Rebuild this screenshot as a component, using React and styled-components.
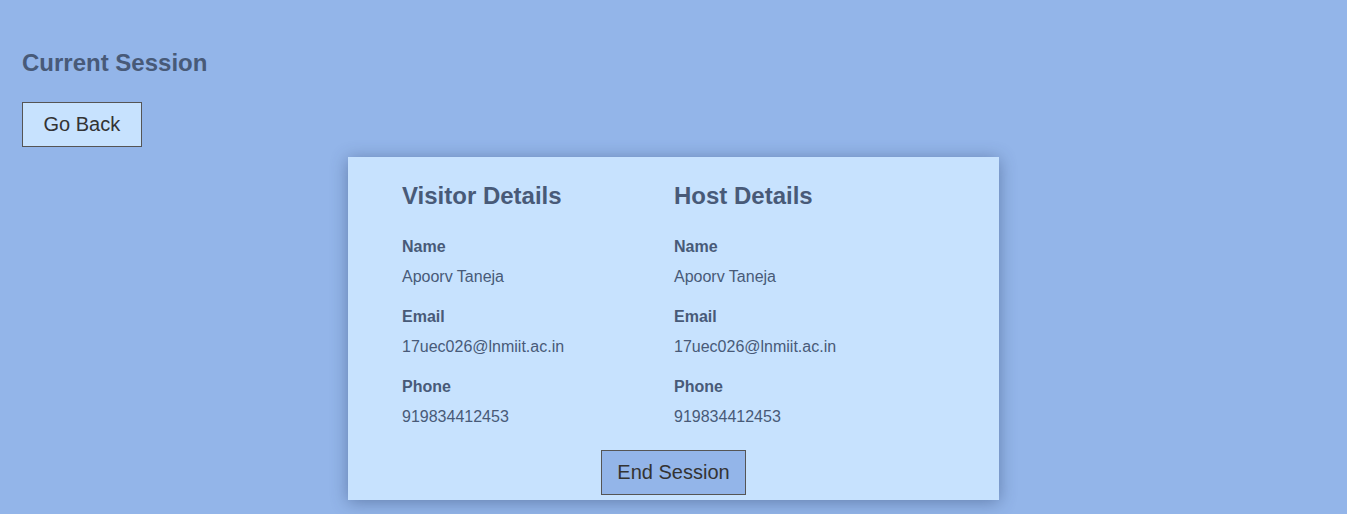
import React from 'react'
import styled, { createGlobalStyle } from 'styled-components'

const GlobalStyle = createGlobalStyle`
  html, body {
    margin: 0;
    padding: 0;
    background: #93b5e9;
    font-family: "Liberation Sans", Arial, sans-serif;
    color: #485a78;
  }
`

const Page = styled.div`
  min-height: 514px;
  padding: 49px 0 0;
  box-sizing: border-box;
`

const Header = styled.div`
  padding: 0 22px;
`

const Title = styled.h2`
  margin: 0;
  font-size: 24px;
  line-height: 28px;
  font-weight: bold;
`

const Button = styled.button`
  font-family: "Liberation Sans", Arial, sans-serif;
  font-size: 20px;
  line-height: 23px;
  color: #333;
  background: ${p => (p.$primary ? '#93b5e9' : '#c7e2fe')};
  border: 1px solid #555;
  padding: 10px ${p => (p.$primary ? '15px' : '20.5px')};
  cursor: pointer;
`

const BackButton = styled(Button)`
  margin-top: 25px;
`

const Card = styled.div`
  width: 651px;
  margin: 10px auto 0;
  background: #c7e2fe;
  box-shadow: 0 2px 16px rgba(40, 60, 100, 0.45);
  padding: 24px 0 5px;
  box-sizing: border-box;
  display: flex;
  flex-direction: column;
  align-items: center;
`

const Columns = styled.div`
  display: grid;
  grid-template-columns: 272px 272px;
  align-self: stretch;
  padding: 0 54px;
`

const Column = styled.div``

const ColumnTitle = styled.h3`
  margin: 0 0 21px;
  font-size: 24px;
  line-height: 30px;
  font-weight: bold;
`

const Field = styled.div`
  margin-bottom: 10px;
  font-size: 16px;
  line-height: 30px;
`

const Label = styled.div`
  font-weight: bold;
`

const Value = styled.div``

const EndButton = styled(Button)`
  margin-top: 8px;
`

const details = [
  { title: 'Visitor Details', name: 'Apoorv Taneja', email: '17uec026@lnmiit.ac.in', phone: '919834412453' },
  { title: 'Host Details', name: 'Apoorv Taneja', email: '17uec026@lnmiit.ac.in', phone: '919834412453' },
]

export default function App() {
  return (
    <Page>
      <GlobalStyle />
      <Header>
        <Title>Current Session</Title>
        <BackButton>Go Back</BackButton>
      </Header>
      <Card>
        <Columns>
          {details.map(d => (
            <Column key={d.title}>
              <ColumnTitle>{d.title}</ColumnTitle>
              <Field><Label>Name</Label><Value>{d.name}</Value></Field>
              <Field><Label>Email</Label><Value>{d.email}</Value></Field>
              <Field><Label>Phone</Label><Value>{d.phone}</Value></Field>
            </Column>
          ))}
        </Columns>
        <EndButton $primary>End Session</EndButton>
      </Card>
    </Page>
  )
}
